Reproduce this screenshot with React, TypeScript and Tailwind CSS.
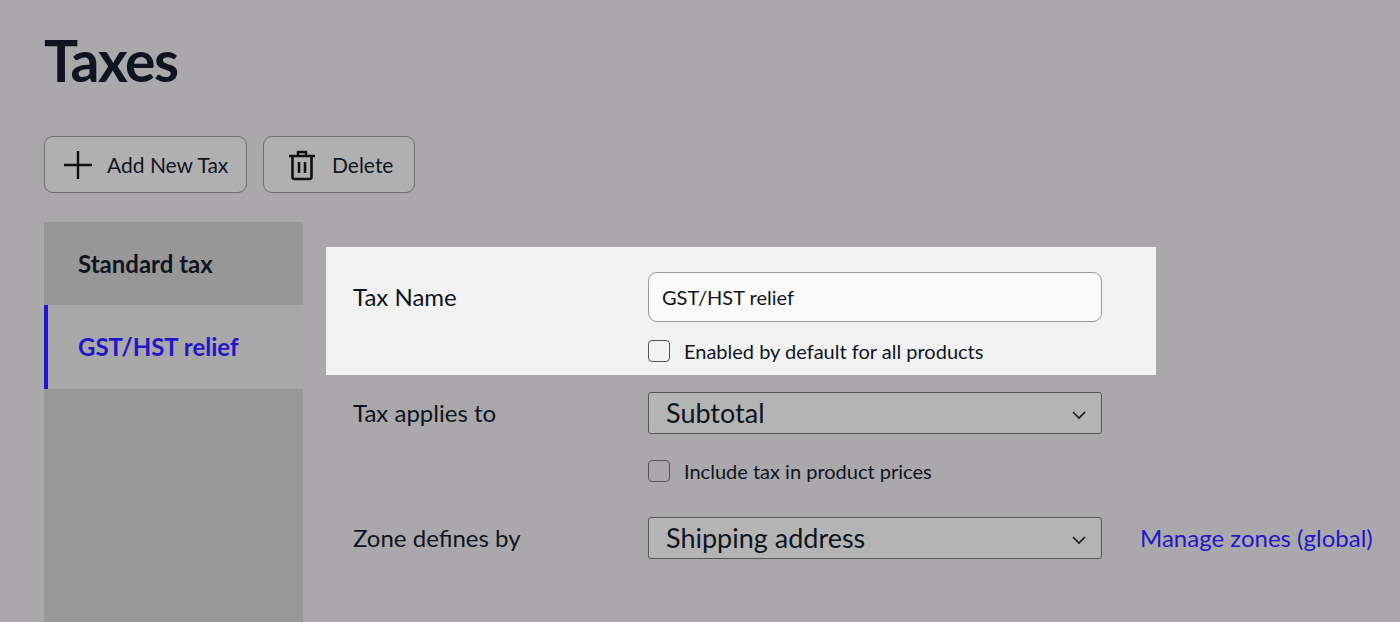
import React from "react";

const Chevron = () => (
  <svg width="16" height="10" viewBox="0 0 16 10" fill="none" stroke="#1a1a1a" strokeWidth="1.6" className="absolute right-[14px] top-[17px]">
    <path d="M2 2l6 6 6-6" />
  </svg>
);

const Box = () => <span className="w-[22px] h-[22px] rounded-[4px] border-[1.5px] border-[#555] bg-transparent shrink-0" />;

export default function App() {
  return (
    <div className="w-[1400px] h-[622px] overflow-hidden bg-[#aaa8aa] text-[#101522]" style={{ fontFamily: "Lato, 'Open Sans', sans-serif" }}>
      <div className="pl-[44px] pt-[26px]">
        <h1 className="text-[57px] font-bold leading-[68px] tracking-tight text-[#0f1420]">Taxes</h1>
        <div className="flex gap-[16px] mt-[42px]">
          <button className="h-[57px] w-[203px] rounded-[9px] border border-[#6f6f6f] bg-[#b0b0b0] flex items-center gap-[14px] pl-[18px] text-[21px]">
            <svg width="30" height="30" viewBox="0 0 30 30" stroke="#111" strokeWidth="2.4"><path d="M15 1v28M1 15h28" /></svg>
            Add New Tax
          </button>
          <button className="h-[57px] w-[152px] rounded-[9px] border border-[#6f6f6f] bg-[#b0b0b0] flex items-center gap-[16px] pl-[24px] text-[21px]">
            <svg width="28" height="32" viewBox="0 0 28 32" fill="none" stroke="#111" strokeWidth="2.6" strokeLinejoin="round">
              <path d="M1 7h26M10 7V3h8v4M4.5 7v21a2 2 0 0 0 2 2h15a2 2 0 0 0 2-2V7M11 13v11M17 13v11" />
            </svg>
            Delete
          </button>
        </div>
        <div className="flex mt-[29px]">
          <div className="w-[259px] h-[400px] bg-[#989898] flex flex-col">
            <div className="h-[83px] bg-[#979797] flex items-center pl-[34px] text-[24px] font-bold">Standard tax</div>
            <div className="h-[84px] bg-[#a8a8a8] border-l-[4px] border-[#2416c8] flex items-center pl-[30px] text-[24px] font-bold text-[#2416c8]">GST/HST relief</div>
          </div>
          <div className="flex flex-col pt-[25px] ml-[23px]">
            <div className="w-[830px] h-[128px] bg-[#f2f2f2] pl-[27px] pt-[25px] flex">
              <div className="w-[295px] text-[24px] leading-[49px]">Tax Name</div>
              <div className="flex flex-col">
                <div className="w-[454px] h-[50px] rounded-[9px] border-[1.5px] border-[#9a9a9a] bg-[#fafafa] flex items-center pl-[13px] text-[20px]">GST/HST relief</div>
                <div className="flex items-center gap-[14px] mt-[14px] text-[20px]"><Box />Enabled by default for all products</div>
              </div>
            </div>
            <div className="flex pl-[27px] mt-[17px]">
              <div className="w-[295px] text-[24px] leading-[42px]">Tax applies to</div>
              <div className="flex flex-col">
                <div className="relative w-[454px] h-[42px] rounded-[3px] border-[1.5px] border-[#555] bg-[#b4b4b4] flex items-center pl-[17px] text-[27px]">Subtotal<Chevron /></div>
                <div className="flex items-center gap-[14px] mt-[22px] text-[20px]"><Box />Include tax in product prices</div>
              </div>
            </div>
            <div className="flex pl-[27px] mt-[31px] items-center">
              <div className="w-[295px] text-[24px]">Zone defines by</div>
              <div className="relative w-[454px] h-[42px] rounded-[3px] border-[1.5px] border-[#555] bg-[#b4b4b4] flex items-center pl-[17px] text-[27px]">Shipping address<Chevron /></div>
              <div className="ml-[38px] text-[24px] text-[#2416c8] whitespace-nowrap">Manage zones (global)</div>
            </div>
          </div>
        </div>
      </div>
    </div>
  );
}
